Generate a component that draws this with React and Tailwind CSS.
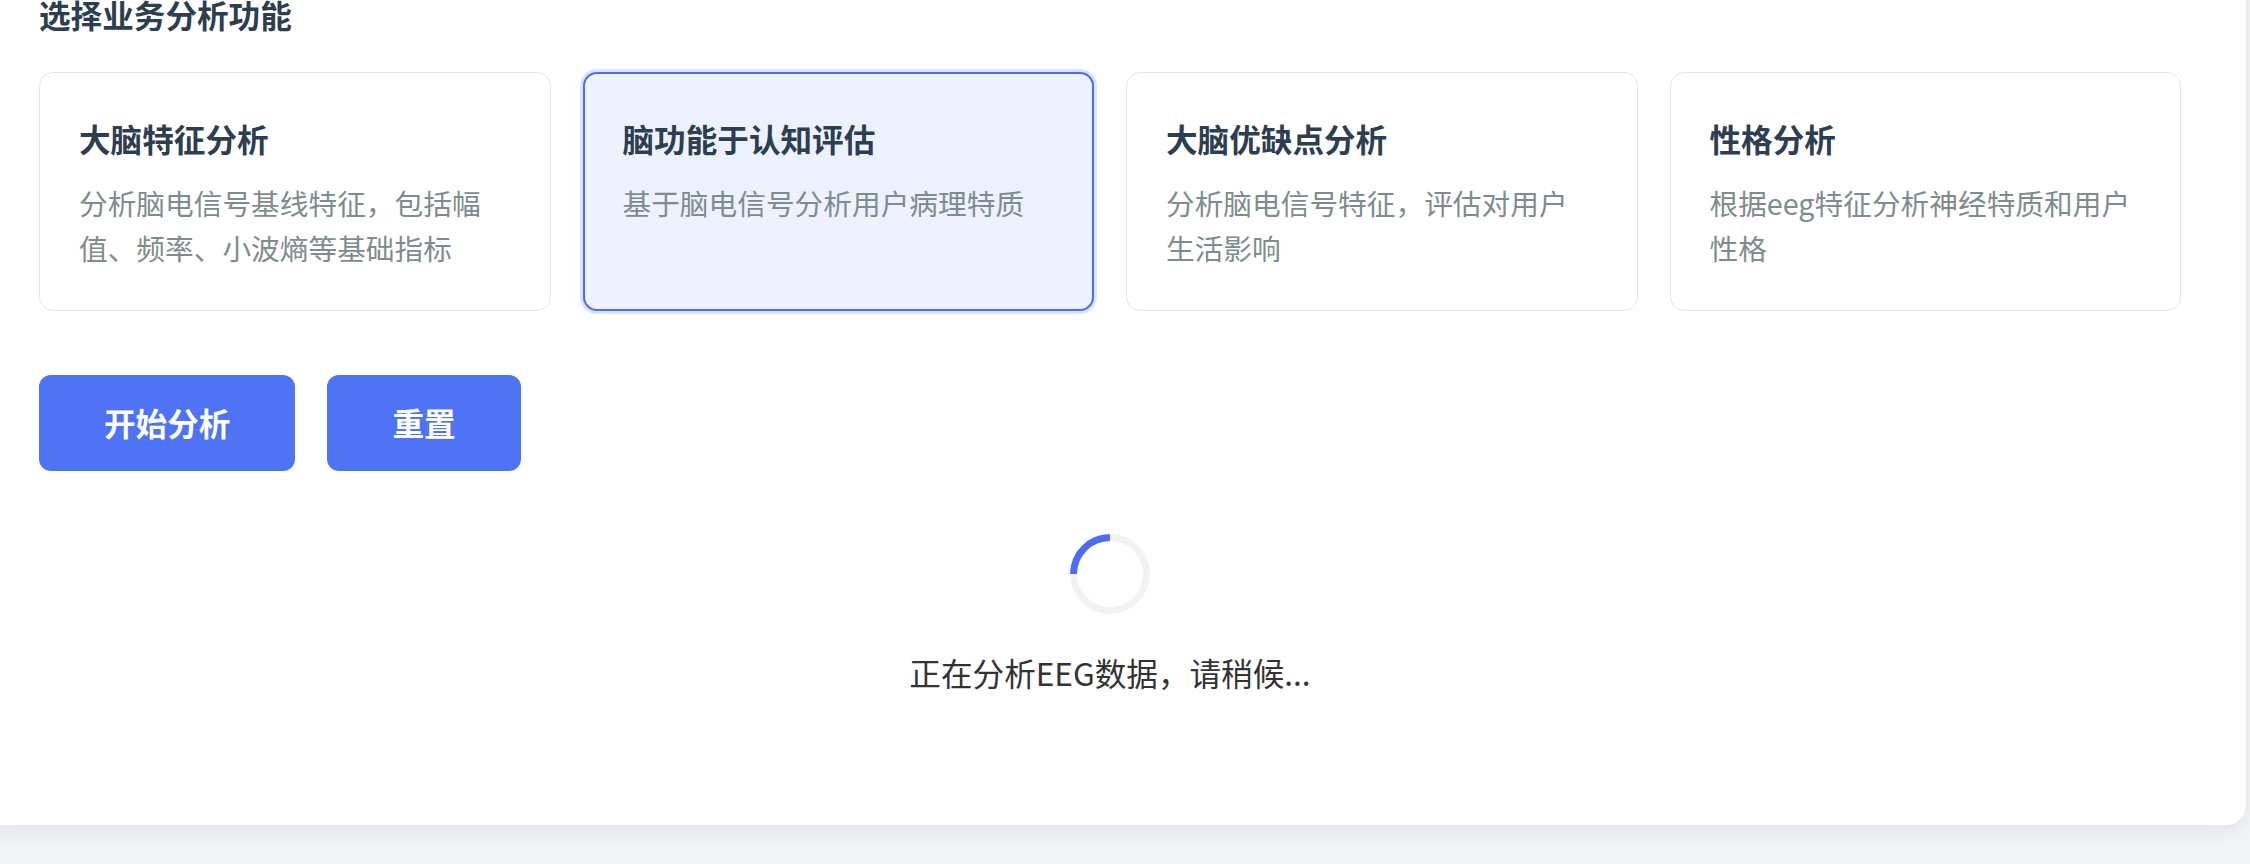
const FEATURES = [
  { title: '大脑特征分析', desc: '分析脑电信号基线特征，包括幅值、频率、小波熵等基础指标' },
  { title: '脑功能于认知评估', desc: '基于脑电信号分析用户病理特质', active: true },
  { title: '大脑优缺点分析', desc: '分析脑电信号特征，评估对用户生活影响' },
  { title: '性格分析', desc: '根据eeg特征分析神经特质和用户性格' },
]

function FeatureCard({ title, desc, active }) {
  return (
    <div
      className={
        active
          ? 'rounded-[14px] border-2 border-[#4a6cf6] bg-[#edf2fe] pl-[38px] pr-[44px] pt-[41px] pb-[39px] shadow-[0_0_0_3px_#dbe4fd]'
          : 'rounded-[14px] border border-[#e2e5ea] bg-white pl-[39px] pr-[45px] pt-[42px] pb-[40px]'
      }
    >
      <div className="text-[31.6px] leading-[47px] font-bold text-[#2c3e50]">{title}</div>
      <div className="mt-[18px] text-[28.7px] leading-[45px] text-[#7f8c8d]">{desc}</div>
    </div>
  )
}

export default function App() {
  return (
    <div className="w-[2250px] h-[864px] overflow-hidden bg-[#f3f4f8] font-['Noto_Sans_CJK_SC','Noto_Sans',sans-serif]">
      <div className="-mt-[40px] -ml-[20px] mr-[4px] rounded-[20px] bg-white pl-[59px] pr-[65px] pt-[30px] pb-[130px] shadow-[0_6px_22px_rgba(30,40,70,0.08)]">
        <h2 className="text-[31.6px] leading-[48px] font-bold text-[#2c3e50]">选择业务分析功能</h2>

        <div className="mt-[34px] grid grid-cols-4 gap-[32px]">
          {FEATURES.map((f) => (
            <FeatureCard key={f.title} {...f} />
          ))}
        </div>

        <div className="mt-[64px] flex gap-[32px]">
          <button className="h-[96px] rounded-[12px] bg-[#4e73f5] px-[65px] text-[31.6px] font-bold text-white">
            开始分析
          </button>
          <button className="h-[96px] rounded-[12px] bg-[#4e73f5] px-[65px] text-[31.6px] font-bold text-white">
            重置
          </button>
        </div>

        {/* loading state */}
        <div className="mt-[63px] flex flex-col items-center">
          <div className="h-[80px] w-[80px] -rotate-45 rounded-full border-[7px] border-[#f1f2f5] border-t-[#4a6cf6]" />
          <p className="mt-[36px] text-[31.6px] leading-[45px] text-[#333333]">正在分析EEG数据，请稍候...</p>
        </div>
      </div>
    </div>
  )
}
